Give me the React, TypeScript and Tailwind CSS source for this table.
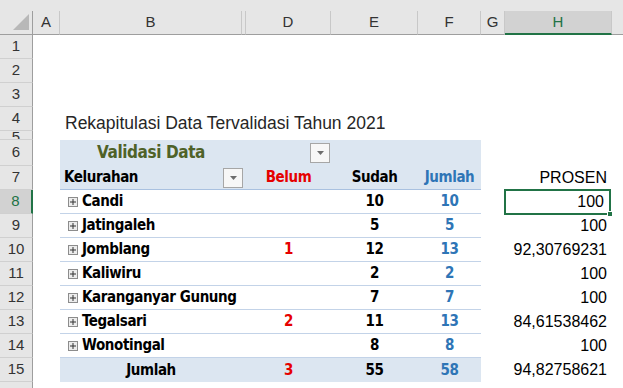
import { ReactNode } from "react";

const pivotFont = "font-['DejaVu_Sans_Condensed','DejaVu_Sans',sans-serif] font-bold tracking-[-0.4px]";

type DataRow = {
  n: number;
  name: string;
  belum: string;
  sudah: string;
  jumlah: string;
  prosen: string;
};

const rows: DataRow[] = [
  { n: 8, name: "Candi", belum: "", sudah: "10", jumlah: "10", prosen: "100" },
  { n: 9, name: "Jatingaleh", belum: "", sudah: "5", jumlah: "5", prosen: "100" },
  { n: 10, name: "Jomblang", belum: "1", sudah: "12", jumlah: "13", prosen: "92,30769231" },
  { n: 11, name: "Kaliwiru", belum: "", sudah: "2", jumlah: "2", prosen: "100" },
  { n: 12, name: "Karanganyar Gunung", belum: "", sudah: "7", jumlah: "7", prosen: "100" },
  { n: 13, name: "Tegalsari", belum: "2", sudah: "11", jumlah: "13", prosen: "84,61538462" },
  { n: 14, name: "Wonotingal", belum: "", sudah: "8", jumlah: "8", prosen: "100" },
];

function RowHead({ n, active }: { n?: number; active?: boolean }) {
  return (
    <div
      className={
        "w-[33px] shrink-0 flex items-center justify-center overflow-hidden border-b border-[#d0d0d0] text-[15px] " +
        (active
          ? "bg-[#d2d2d2] text-[#217346] border-r-2 border-r-[#217346]"
          : "bg-[#e6e6e6] text-[#333] border-r border-r-[#9e9e9e]")
      }
    >
      {n}
    </div>
  );
}

function DropButton() {
  return (
    <div className="w-[20px] h-[20px] border border-[#a6a6a6] bg-[#f7f7f7] flex items-center justify-center">
      <svg width="7" height="4" viewBox="0 0 7 4">
        <path d="M0 0h7L3.5 4z" fill="#6d6d6d" />
      </svg>
    </div>
  );
}

function PlusBox() {
  return (
    <div className="w-[10px] h-[10px] border border-[#8c8c8c] bg-[#ececec] flex items-center justify-center shrink-0">
      <svg width="6" height="6" viewBox="0 0 6 6">
        <path d="M0 3h6M3 0v6" stroke="#333" strokeWidth="1" />
      </svg>
    </div>
  );
}

function Line({ n, children }: { n?: number; children?: ReactNode }) {
  return (
    <div className="flex h-[24px]">
      <RowHead n={n} />
      <div className="flex flex-1 min-w-0">{children}</div>
    </div>
  );
}

export default function App() {
  return (
    <div className="w-[623px] h-[388px] overflow-hidden bg-white font-['Liberation_Sans',Arial,sans-serif] text-black">
      <div className="h-[11px] bg-[#e6e6e6]" />
      {/* column headers */}
      <div className="flex h-[24px] bg-[#e6e6e6] text-[15px] text-[#333]">
        <div className="w-[33px] shrink-0 border-r border-b border-[#9e9e9e] flex items-end justify-end pr-[3px] pb-[4px]">
          <svg width="16" height="16" viewBox="0 0 16 16">
            <path d="M16 0V16H0z" fill="#b8b8b8" />
          </svg>
        </div>
        <div className="w-[27px] shrink-0 border-r border-[#c8c8c8] border-b border-b-[#9e9e9e] flex items-center justify-center">A</div>
        <div className="w-[182px] shrink-0 border-r border-[#c8c8c8] border-b border-b-[#9e9e9e] flex items-center justify-center">B</div>
        <div className="w-[4px] shrink-0 border-r border-[#c8c8c8] border-b border-b-[#9e9e9e]" />
        <div className="w-[85px] shrink-0 border-r border-[#c8c8c8] border-b border-b-[#9e9e9e] flex items-center justify-center">D</div>
        <div className="w-[87px] shrink-0 border-r border-[#c8c8c8] border-b border-b-[#9e9e9e] flex items-center justify-center">E</div>
        <div className="w-[63px] shrink-0 border-r border-[#c8c8c8] border-b border-b-[#9e9e9e] flex items-center justify-center">F</div>
        <div className="w-[24px] shrink-0 border-r border-[#c8c8c8] border-b border-b-[#9e9e9e] flex items-center justify-center">G</div>
        <div className="w-[107px] shrink-0 bg-[#d2d2d2] border-r border-[#c8c8c8] border-b-2 border-b-[#217346] flex items-center justify-center text-[#217346]">H</div>
        <div className="flex-1 border-b border-[#9e9e9e]" />
      </div>

      <Line n={1} />
      <Line n={2} />
      <Line n={3} />
      <Line n={4}>
        <div className="pl-[32px] pt-[3px] text-[17.5px] text-[#262626] whitespace-nowrap">
          Rekapitulasi Data Tervalidasi Tahun 2021
        </div>
      </Line>
      <div className="flex h-[9px]">
        <div className="w-[33px] shrink-0 bg-[#e6e6e6] border-r border-[#9e9e9e] border-b border-b-[#d0d0d0] overflow-hidden flex justify-center text-[15px] text-[#333] leading-[15px]">
          <span className="-mt-[2px]">5</span>
        </div>
      </div>

      {/* row 6 */}
      <div className="flex h-[26px]">
        <RowHead n={6} />
        <div className="w-[27px] shrink-0" />
        <div className="flex w-[421px] shrink-0 bg-[#dce6f1]">
          <div className={"w-[182px] flex items-center justify-center text-[17px] text-[#4f6228] " + pivotFont}>
            Validasi Data
          </div>
          <div className="w-[4px]" />
          <div className="w-[85px] flex items-center justify-end pr-[1px]">
            <DropButton />
          </div>
          <div className="w-[87px]" />
          <div className="w-[63px]" />
        </div>
      </div>

      {/* row 7 */}
      <div className="flex h-[24px]">
        <RowHead n={7} />
        <div className="w-[27px] shrink-0" />
        <div className={"flex w-[421px] shrink-0 bg-[#dce6f1] border-b border-[#a9c1e0] text-[15px] " + pivotFont}>
          <div className="w-[182px] flex items-center justify-between pl-[4px]">
            <span>Kelurahan</span>
            <div className="mr-[-1px]">
              <DropButton />
            </div>
          </div>
          <div className="w-[4px]" />
          <div className="w-[85px] flex items-center justify-center text-[#e60000]">Belum</div>
          <div className="w-[87px] flex items-center justify-center">Sudah</div>
          <div className="w-[63px] flex items-center justify-center text-[#2e75b6]">Jumlah</div>
        </div>
        <div className="w-[24px] shrink-0" />
        <div className="w-[107px] shrink-0 flex items-center justify-end pr-[5px] text-[16px]">PROSEN</div>
      </div>

      {rows.map((r) => (
        <div key={r.n} className="flex h-[24px]">
          <RowHead n={r.n} active={r.n === 8} />
          <div className="w-[27px] shrink-0" />
          <div className={"flex w-[421px] shrink-0 border-b border-[#c3d3e8] text-[15px] " + pivotFont}>
            <div className="w-[182px] flex items-center gap-[4px] pl-[8px] whitespace-nowrap">
              <PlusBox />
              <span>{r.name}</span>
            </div>
            <div className="w-[4px]" />
            <div className="w-[85px] flex items-center justify-center text-[#e60000]">{r.belum}</div>
            <div className="w-[87px] flex items-center justify-center">{r.sudah}</div>
            <div className="w-[63px] flex items-center justify-center text-[#2e75b6]">{r.jumlah}</div>
          </div>
          <div className="w-[24px] shrink-0" />
          {r.n === 8 ? (
            <div className="relative w-[107px] shrink-0 flex items-center justify-end pr-[5px] text-[16px] border-2 border-[#217346] -ml-[1px] -mt-[1px] h-[26px]">
              {r.prosen}
              <div className="absolute right-[-4px] bottom-[-4px] w-[6px] h-[6px] bg-[#217346] border border-white" />
            </div>
          ) : (
            <div className="w-[107px] shrink-0 flex items-center justify-end pr-[5px] text-[16px]">{r.prosen}</div>
          )}
        </div>
      ))}

      {/* row 15 */}
      <div className="flex h-[24px]">
        <RowHead n={15} />
        <div className="w-[27px] shrink-0" />
        <div className={"flex w-[421px] shrink-0 bg-[#dce6f1] text-[15px] " + pivotFont}>
          <div className="w-[182px] flex items-center justify-center">Jumlah</div>
          <div className="w-[4px]" />
          <div className="w-[85px] flex items-center justify-center text-[#e60000]">3</div>
          <div className="w-[87px] flex items-center justify-center">55</div>
          <div className="w-[63px] flex items-center justify-center text-[#2e75b6]">58</div>
        </div>
        <div className="w-[24px] shrink-0" />
        <div className="w-[107px] shrink-0 flex items-center justify-end pr-[5px] text-[16px]">94,82758621</div>
      </div>
      <Line />
    </div>
  );
}
